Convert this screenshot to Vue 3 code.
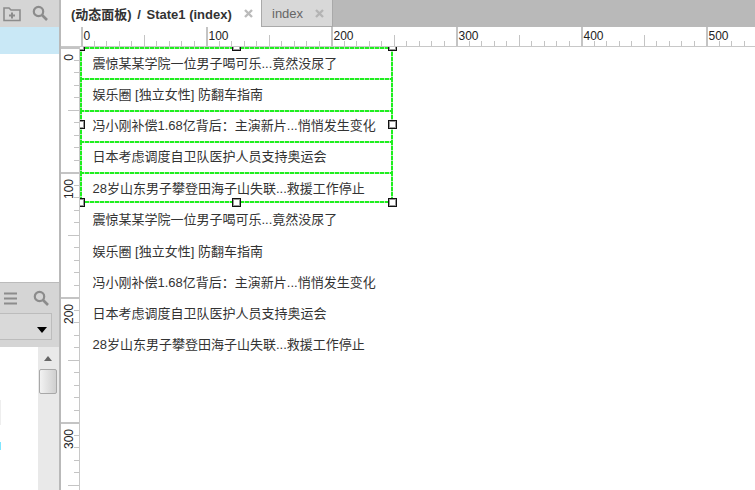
<script setup>
const news = [
  '震惊某某学院一位男子喝可乐...竟然没尿了',
  '娱乐圈 [独立女性] 防翻车指南',
  '冯小刚补偿1.68亿背后：主演新片...悄悄发生变化',
  '日本考虑调度自卫队医护人员支持奥运会',
  '28岁山东男子攀登田海子山失联...救援工作停止',
];

// 刻度 每 100 = 125px
const step = 12.5;
const hLabels = [0, 100, 200, 300, 400, 500];
const vLabels = [0, 100, 200, 300];
const hTicks = Array.from({ length: 54 }, (_, i) => i);
const vTicks = Array.from({ length: 36 }, (_, i) => i);

const tickSize = (i) => (i % 10 === 0 ? 19 : i % 5 === 0 ? 11 : 5);
const tickWeight = (i) => (i % 10 === 0 ? 2 : 1);

const handles = ['tl', 'tc', 'tr', 'ml', 'mr', 'bl', 'bc', 'br'];
</script>

<template>
  <div class="app">
    <aside class="side">
      <div class="side-head">
        <svg class="folder" width="18" height="16" viewBox="0 0 18 16">
          <path d="M1 14.500V2h5l2 2h9v10.500z" fill="none" stroke="#8c8c8c" stroke-width="1.600" />
          <path d="M9 6.500v6M6 9.500h6" stroke="#8c8c8c" stroke-width="2" />
        </svg>
        <svg class="search" width="16" height="16" viewBox="0 0 16 16">
          <circle cx="6.500" cy="6.500" r="4.700" fill="none" stroke="#8c8c8c" stroke-width="2.200" />
          <path d="M10 10l5 5" stroke="#8c8c8c" stroke-width="2.600" />
        </svg>
      </div>
      <div class="side-selected"></div>
      <div class="side-empty"></div>
      <div class="side-head2">
        <div class="side-tools">
          <svg width="13" height="13" viewBox="0 0 13 13">
            <path d="M0 1.500h13M0 6.500h13M0 11.500h13" stroke="#8c8c8c" stroke-width="2.200" />
          </svg>
          <svg class="search2" width="16" height="16" viewBox="0 0 16 16">
            <circle cx="6.500" cy="6.500" r="4.700" fill="none" stroke="#8c8c8c" stroke-width="2.200" />
            <path d="M10 10l5 5" stroke="#8c8c8c" stroke-width="2.600" />
          </svg>
        </div>
        <div class="side-select"><span class="caret"></span></div>
      </div>
      <div class="side-list">
        <div class="side-tree">
          <span class="mark mark-pale"></span>
          <span class="mark mark-cyan"></span>
        </div>
        <div class="scrollbar">
          <span class="scroll-up"></span>
          <span class="scroll-thumb"></span>
        </div>
      </div>
    </aside>

    <main class="main">
      <div class="tabs">
        <div class="tab active">
          <span class="tab-title">(动态面板) <span class="slash">/</span> State1 (index)</span>
          <svg class="tab-close" width="9" height="9" viewBox="0 0 9 9">
            <path d="M1 1l7 7M8 1l-7 7" stroke="#bbb" stroke-width="2.400" />
          </svg>
        </div>
        <div class="tab">
          <span>index</span>
          <svg class="tab-close" width="9" height="9" viewBox="0 0 9 9">
            <path d="M1 1l7 7M8 1l-7 7" stroke="#b4b4b4" stroke-width="2.400" />
          </svg>
        </div>
      </div>

      <div class="ruler-h">
        <i v-for="i in hTicks" :key="i" class="tick-h" :style="{ left: 20 + i * step + 'px', height: tickSize(i) + 'px', width: tickWeight(i) + 'px' }"></i>
        <span v-for="(n, i) in hLabels" :key="n" class="label-h" :style="{ left: 22.500 + i * 125 + 'px' }">{{ n }}</span>
      </div>

      <div class="work">
        <div class="ruler-v">
          <i v-for="i in vTicks" :key="i" class="tick-v" :style="{ top: i * step + 'px', width: tickSize(i) + 'px', height: tickWeight(i) + 'px' }"></i>
          <span v-for="(n, i) in vLabels" :key="n" class="label-v" :style="{ top: 7 + i * 125 + 'px' }">{{ n }}</span>
        </div>
        <div class="canvas">
          <div class="selection">
            <div v-for="text in news" :key="text" class="row boxed">{{ text }}</div>
            <span v-for="h in handles" :key="h" class="handle" :class="h"></span>
          </div>
          <div class="plain">
            <div v-for="text in news" :key="text" class="row">{{ text }}</div>
          </div>
        </div>
      </div>
    </main>
  </div>
</template>

<style>
html, body {
  margin: 0;
  overflow: hidden;
}
</style>

<style scoped>
.app {
  display: flex;
  width: 755px;
  height: 490px;
  overflow: hidden;
  background: #fff;
  font-family: "Liberation Sans", "Noto Sans CJK SC", sans-serif;
  color: #333;
}

/* 左侧面板 */
.side {
  display: flex;
  flex-direction: column;
  flex: none;
  width: 59px;
  border-right: 2px solid #b9b9b9;
}
.side-head {
  display: flex;
  align-items: center;
  flex: none;
  height: 27px;
  padding: 0 0 1px 3px;
  box-sizing: border-box;
  background: #d5d5d5;
}
.folder {
  margin-top: 2px;
}
.search {
  margin-left: 11px;
}
.side-selected {
  flex: none;
  height: 27px;
  background: #c9e8f6;
}
.side-empty {
  flex: none;
  height: 228px;
  border-bottom: 1px solid #bbb;
}
.side-head2 {
  flex: none;
  height: 64px;
  background: #d5d5d5;
}
.side-tools {
  display: flex;
  align-items: center;
  height: 30px;
  padding-left: 4px;
}
.search2 {
  margin-left: 16px;
}
.side-select {
  position: relative;
  width: 51px;
  height: 25px;
  border: 1px solid #bcbcbc;
  border-left: 0;
  background: #d9d9d9;
}
.caret {
  position: absolute;
  top: 13px;
  left: 37px;
  border-top: 6px solid #000;
  border-left: 5px solid transparent;
  border-right: 5px solid transparent;
}
.side-list {
  display: flex;
  flex: 1;
  min-height: 0;
}
.side-tree {
  position: relative;
  flex: 1;
}
.mark {
  position: absolute;
  left: 0;
  width: 1px;
}
.mark-pale {
  top: 53px;
  height: 25px;
  background: #eeeeee;
}
.mark-cyan {
  top: 95px;
  height: 8px;
  background: #7fe6ff;
}
.scrollbar {
  position: relative;
  flex: none;
  width: 21px;
  background: #e9e9e9;
}
.scroll-up {
  position: absolute;
  top: 9px;
  left: 6px;
  border-bottom: 5px solid #666;
  border-left: 4px solid transparent;
  border-right: 4px solid transparent;
}
.scroll-thumb {
  position: absolute;
  top: 22px;
  left: 1px;
  width: 16px;
  height: 23px;
  border: 1px solid #a8a8a8;
  border-radius: 2px;
  background: linear-gradient(to right, #f2f2f2, #cfcfcf);
}

/* 标签栏 */
.main {
  display: flex;
  flex-direction: column;
  flex: 1;
  min-width: 0;
}
.tabs {
  display: flex;
  flex: none;
  height: 27px;
  background: #b9b9b9;
}
.tab {
  display: flex;
  align-items: center;
  box-sizing: border-box;
  width: 72px;
  padding-left: 10px;
  border-left: 1px solid #a9a9a9;
  border-right: 1px solid #a9a9a9;
  border-bottom: 1px solid #a9a9a9;
  background: #d8d8d8;
  font-size: 13px;
  color: #666;
}
.tab.active {
  width: 200px;
  padding-left: 10px;
  border: 0;
  background: #fff;
  color: #333;
}
.tab-title {
  font-size: 13px;
  font-weight: bold;
  white-space: nowrap;
}
.slash {
  margin: 0 2px;
}
.tab-close {
  flex: none;
  margin-left: 12px;
}

/* 标尺 */
.ruler-h {
  position: relative;
  flex: none;
  height: 20px;
  border-bottom: 1px solid #c8c8c8;
  box-sizing: border-box;
  overflow: hidden;
}
.tick-h {
  position: absolute;
  bottom: 0;
  background: #c4c4c4;
}
.label-h {
  position: absolute;
  top: 2px;
  font-size: 12px;
  line-height: 14px;
  color: #222;
}
.work {
  display: flex;
  flex: 1;
  min-height: 0;
}
.ruler-v {
  position: relative;
  flex: none;
  width: 19px;
  box-sizing: border-box;
  border-right: 1px solid #c8c8c8;
  overflow: hidden;
}
.tick-v {
  position: absolute;
  right: 0;
  background: #c4c4c4;
}
.label-v {
  position: absolute;
  left: 1px;
  font-size: 12px;
  line-height: 14px;
  color: #222;
  writing-mode: vertical-rl;
  transform: rotate(180deg);
}

/* 画布 */
.canvas {
  flex: 1;
  min-width: 0;
  overflow: hidden;
}
.selection {
  position: relative;
  box-sizing: border-box;
  width: 313px;
  height: 156.250px;
}
.row {
  display: flex;
  align-items: center;
  box-sizing: border-box;
  height: 31.250px;
  padding-left: 12.500px;
  font-size: 13px;
  white-space: nowrap;
}
/* 绿色虚线 */
.boxed {
  padding-bottom: 1px;
  background-image:
    repeating-linear-gradient(to right, #1ff01f 0 4px, #b5e6b5 4px 5px),
    repeating-linear-gradient(to bottom, #1ff01f 0 4px, #b5e6b5 4px 5px),
    repeating-linear-gradient(to bottom, #1ff01f 0 4px, #b5e6b5 4px 5px);
  background-size: 100% 2px, 2px 100%, 2px 100%;
  background-position: left top, left top, right top;
  background-repeat: no-repeat;
}
.boxed:nth-of-type(5) {
  background-image:
    repeating-linear-gradient(to right, #1ff01f 0 4px, #b5e6b5 4px 5px),
    repeating-linear-gradient(to right, #1ff01f 0 4px, #b5e6b5 4px 5px),
    repeating-linear-gradient(to bottom, #1ff01f 0 4px, #b5e6b5 4px 5px),
    repeating-linear-gradient(to bottom, #1ff01f 0 4px, #b5e6b5 4px 5px);
  background-size: 100% 2px, 100% 2px, 2px 100%, 2px 100%;
  background-position: left top, left bottom, left top, right top;
}
.handle {
  position: absolute;
  box-sizing: border-box;
  width: 9px;
  height: 9px;
  border: 1px solid #111;
  background: #fff;
  box-shadow: inset 0 0 0 1px #999;
}
.tl, .tc, .tr { top: -5px; }
.ml, .mr { top: 73px; }
.bl, .bc, .br { top: 151px; }
.tl, .ml, .bl { left: -4px; }
.tc, .bc { left: 152px; }
.tr, .mr, .br { right: -4px; }
</style>
